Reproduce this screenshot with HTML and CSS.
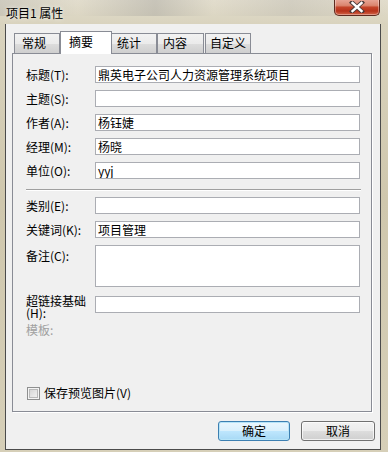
FILE: index.html
```html
<!DOCTYPE html>
<html>
<head>
<meta charset="utf-8">
<link rel="stylesheet" href="styles.css">
</head>
<body>
<div class="window">
  <div class="titlebar">
    <span class="title">项目1 属性</span>
    <div class="close">
      <svg width="18" height="12" viewBox="0 0 18 12">
        <path d="M4 1.5 L14 10.5 M14 1.5 L4 10.5" stroke="#4a3a3a" stroke-width="4.2" stroke-linecap="square"/>
        <path d="M4.5 2 L13.5 10 M13.5 2 L4.5 10" stroke="#ffffff" stroke-width="2.4" stroke-linecap="square"/>
      </svg>
    </div>
  </div>
  <div class="client">
    <div class="tabs">
      <div class="tab t-general">常规</div>
      <div class="tab tab-active t-summary">摘要</div>
      <div class="tab t-stats">统计</div>
      <div class="tab t-content">内容</div>
      <div class="tab t-custom">自定义</div>
    </div>
    <div class="panel">
      <div class="row"><span class="label">标题(T):</span><div class="input">鼎英电子公司人力资源管理系统项目</div></div>
      <div class="row"><span class="label">主题(S):</span><div class="input"></div></div>
      <div class="row"><span class="label">作者(A):</span><div class="input">杨钰婕</div></div>
      <div class="row"><span class="label">经理(M):</span><div class="input">杨晓</div></div>
      <div class="row"><span class="label">单位(O):</span><div class="input">yyj</div></div>
      <div class="sep"></div>
      <div class="row"><span class="label">类别(E):</span><div class="input"></div></div>
      <div class="row"><span class="label">关键词(K):</span><div class="input">项目管理</div></div>
      <div class="row row-top row-notes"><span class="label label-notes">备注(C):</span><div class="input textarea"></div></div>
      <div class="row row-top row-link"><span class="label label-two">超链接基础 (H):</span><div class="input"></div></div>
      <div class="template">模板:</div>
      <div class="check-row"><span class="checkbox"></span><span class="check-label">保存预览图片(V)</span></div>
    </div>
    <div class="buttons">
      <div class="btn btn-default">确定</div>
      <div class="btn btn-cancel">取消</div>
    </div>
  </div>
</div>
</body>
</html>
```

FILE: styles.css
```css
* { box-sizing: border-box; }
html, body { margin: 0; padding: 0; }
body {
  width: 388px;
  height: 452px;
  overflow: hidden;
  font-family: "Noto Sans CJK SC", "Noto Sans", sans-serif;
  font-size: 12px;
  color: #000;
}
.window {
  width: 388px;
  height: 452px;
  display: flex;
  flex-direction: column;
  padding: 0 7px 2px 5px;
  background:
    linear-gradient(90deg, rgba(150,150,150,0.25) 0%, rgba(200,200,200,0) 20%, rgba(140,140,140,0.3) 40%, rgba(220,220,220,0) 55%, rgba(150,150,150,0.2) 75%, rgba(200,200,200,0) 100%) 0 0 / 100% 16px no-repeat,
    linear-gradient(180deg, #e2ddcd 0px, #d9d3be 24px, #cfc7ad 200px, #d6cfb8 452px);
}
.titlebar {
  height: 24px;
  display: flex;
  justify-content: space-between;
  align-items: flex-start;
  margin-right: -7px;
  padding-right: 8px;
}
.title {
  margin-top: 5px;
  margin-left: 1px;
  font-size: 12px;
  line-height: 16px;
  color: #000;
  text-shadow: 0 0 4px rgba(255,255,255,0.9);
}
.close {
  width: 46px;
  height: 17px;
  margin-top: -1px;
  border: 1px solid #5d2a1f;
  border-top: none;
  border-radius: 0 0 5px 5px;
  background: linear-gradient(180deg, #e9a99a 0%, #db8670 40%, #c4442a 52%, #b7321a 75%, #d2664a 100%);
  box-shadow: inset 0 0 0 1px rgba(255,255,255,0.35);
  display: flex;
  align-items: center;
  justify-content: center;
}
.close svg { display: block; }
.client {
  flex: 1;
  background: #f0f0f0;
  border-left: 1px solid #4b4b4b;
  border-right: 1px solid #4b4b4b;
  border-bottom: 1px solid #4b4b4b;
  display: flex;
  flex-direction: column;
}
.tabs {
  margin-top: 7px;
  margin-left: 8px;
  height: 22px;
  display: flex;
  align-items: flex-end;
  position: relative;
  z-index: 2;
}
.tab {
  height: 20px;
  border: 1px solid #898c95;
  border-bottom: none;
  background: linear-gradient(180deg, #f2f2f2 0%, #ebebeb 50%, #dddddd 51%, #cfcfcf 100%);
  line-height: 18px;
  padding-left: 5px;
  font-size: 12px;
}
.t-general { width: 46px; padding-left: 7px; }
.t-summary { width: 52px; }
.t-stats { width: 46px; margin-left: -1px; }
.t-content { width: 47px; }
.t-custom { width: 46px; margin-left: 1px; padding-left: 4px; }
.tab-active {
  height: 23px;
  margin-bottom: -1px;
  background: #ffffff;
  padding-left: 8px;
  line-height: 20px;
  position: relative;
  z-index: 3;
}
.panel {
  margin-left: 6px;
  width: 360px;
  height: 359px;
  border: 1px solid #898c95;
  box-shadow: 1px 1px 0 #ffffff;
  background: #f0f0f0;
  padding: 12px 11px 0 13px;
  display: flex;
  flex-direction: column;
  position: relative;
  z-index: 1;
}
.row {
  display: flex;
  align-items: center;
  height: 17px;
  margin-bottom: 7px;
}
.label {
  width: 69px;
  flex: none;
  line-height: 14px;
  white-space: nowrap;
}
.input {
  width: 265px;
  height: 17px;
  border: 1px solid #abadb3;
  background: #fff;
  padding-left: 2px;
  line-height: 15px;
  white-space: nowrap;
  overflow: hidden;
}
.sep {
  height: 2px;
  width: 335px;
  margin-top: 3px;
  margin-bottom: 6px;
  border-top: 1px solid #a0a0a0;
  border-bottom: 1px solid #ffffff;
}
.row-top {
  align-items: flex-start;
}
.textarea {
  height: 42px;
}
.row-notes { height: 42px; margin-bottom: 9px; }
.label-notes { padding-top: 4px; }
.label-two {
  white-space: normal;
  line-height: 12px;
  margin-top: -1px;
  padding-right: 4px;
}
.row-link { height: 17px; margin-bottom: 0; }
.template {
  color: #a0a0a0;
  margin-top: 9px;
  line-height: 16px;
}
.check-row {
  display: flex;
  align-items: center;
  margin-top: 48px;
  height: 14px;
  margin-left: 1px;
}
.checkbox {
  width: 13px;
  height: 13px;
  border: 1px solid #8e8f8f;
  background: linear-gradient(135deg, #cfcfcf 0%, #e8e8e8 60%, #f4f4f4 100%);
  box-shadow: inset 0 0 0 1px #f4f4f4, inset 0 0 0 2px #b9b9b9;
  margin-right: 4px;
}
.check-label { line-height: 14px; }
.buttons {
  display: flex;
  justify-content: flex-end;
  margin-top: 9px;
  margin-right: 5px;
  gap: 11px;
}
.btn {
  height: 20px;
  border: 1px solid #707070;
  border-radius: 3px;
  text-align: center;
  line-height: 17px;
  font-size: 12px;
  background: linear-gradient(180deg, #f2f2f2 0%, #ebebeb 50%, #dddddd 51%, #cfcfcf 100%);
  box-shadow: inset 0 0 0 1px rgba(255,255,255,0.7);
}
.btn-default {
  width: 72px;
  border-color: #3c7fb1;
  background: linear-gradient(180deg, #eaf6fd 0%, #d9f0fc 50%, #bee6fd 51%, #a7d9f5 100%);
  box-shadow: inset 0 0 0 1px #b6e4f8;
}
.btn-cancel { width: 74px; }
```
